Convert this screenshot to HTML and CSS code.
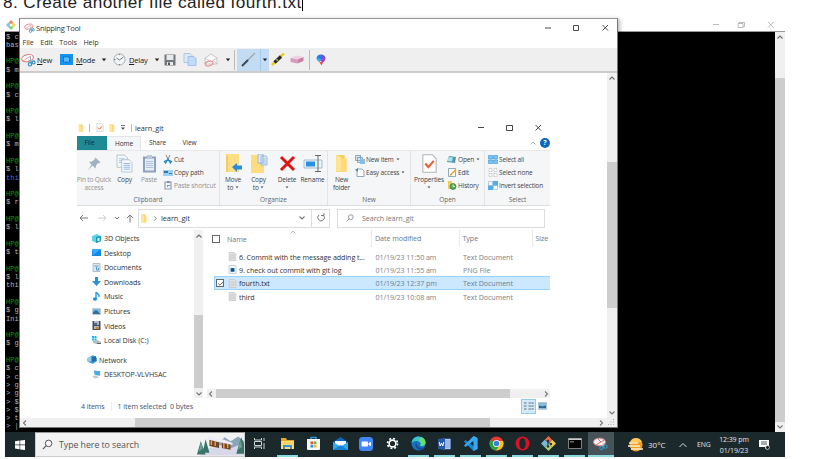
FILE: index.html
```html
<!DOCTYPE html>
<html lang="en">
<head>
<meta charset="utf-8">
<title>Create another file</title>
<link rel="stylesheet" href="styles.css">
</head>
<body>
<svg class="defs" width="0" height="0">
  <symbol id="folder" viewBox="0 0 12 18"><path fill="#f5cd60" d="M1 1h8v16H1z"/><path fill="#ffe594" d="M1 1l5 2v14l-5-1z"/><path fill="#ffd978" d="M6 4h5v13H6z"/></symbol>
  <symbol id="snip" viewBox="0 0 16 14"><ellipse cx="7" cy="5" rx="6.3" ry="3.7" fill="#fff" stroke="#e0767b" stroke-width="1.1" transform="rotate(-14 7 5)"/><path d="M2 8l8-5" stroke="#e59a9c"/><path d="M10 3v7M8 7l5 3" stroke="#8ba5b4"/><circle cx="9.5" cy="11.6" r="1.8" fill="none" stroke="#2c8fc4" stroke-width="1.2"/><circle cx="13.3" cy="9.6" r="1.7" fill="none" stroke="#2c8fc4" stroke-width="1.2"/></symbol>
  <symbol id="doc" viewBox="0 0 9 10"><path fill="#e4e4e4" stroke="#bcbcbc" stroke-width=".7" d="M.8.6h5.7l1.7 1.7v7.1H.8z"/><path stroke="#bdbdbd" stroke-width=".6" d="M2 3h5M2 4.5h5M2 6h5M2 7.5h5"/></symbol>
  <symbol id="pages" viewBox="0 0 18 20"><path fill="#f3f8fd" stroke="#a9b7c6" stroke-width=".8" d="M1 1h8l3 3v10H1z"/><path stroke="#a3c4eb" d="M3 5h6M3 7h6M3 9h6"/><path fill="#f3f8fd" stroke="#a9b7c6" stroke-width=".8" d="M6 6h8l3 3v10H6z"/><path stroke="#8eb9eb" d="M8 10h7M8 12h7M8 14h7M8 16h7"/></symbol>
  <symbol id="up" viewBox="0 0 8 6"><path fill="none" stroke="#707070" stroke-width="1.2" d="M1.5 4.500L4 2l2.500 2.500"/></symbol>
  <symbol id="down" viewBox="0 0 8 6"><path fill="none" stroke="#777" stroke-width="1.1" d="M1.500 1.500L4 4l2.500-2.500"/></symbol>
  <symbol id="lt" viewBox="0 0 6 8"><path fill="none" stroke="#777" stroke-width="1.1" d="M4 1.500L1.500 4 4 6.500"/></symbol>
  <symbol id="rt" viewBox="0 0 6 8"><path fill="none" stroke="#777" stroke-width="1.1" d="M2 1.500L4.500 4 2 6.500"/></symbol>
  <symbol id="caret" viewBox="0 0 6 4"><path d="M.8.500h4.400L3 3.200z" fill="currentColor"/></symbol>
  <symbol id="mag" viewBox="0 0 10 10"><circle cx="6" cy="4" r="3" fill="none" stroke="currentColor" stroke-width=".9"/><path d="M3.900 6.100L.8 9.200" stroke="currentColor"/></symbol>
  <symbol id="check" viewBox="0 0 14 18"><path fill="#fff" stroke="#b4b4b4" d="M.7.700h9l3.600 3.600v13H.7z"/><path d="M3 9l3 3.500L11 6.500" fill="none" stroke="#e8612c" stroke-width="2"/></symbol>
</svg>
<p class="step">8. Create another file called fourth.txt<i class="cursor"></i></p>
<div class="desktop">
  <section class="bash">
    <header class="bash-bar">
      <svg width="10" height="10" viewBox="0 0 12 12"><path fill="#f58f5c" d="M6 0l3 3-3 3-3-3z"/><path fill="#7fc6ef" d="M3 3l3 3-3 3-3-3z"/><path fill="#8fd178" d="M6 6l3 3-3 3-3-3z"/><path fill="#f7d36b" d="M9 3l3 3-3 3-3-3z"/><circle cx="6" cy="6" r="1.500" fill="#fff"/></svg>
      <svg class="bash-ctl" width="62" height="10" viewBox="0 0 62 10" fill="none" stroke="#aaa" stroke-width=".8"><path d="M1 4.500h6M56 2l5.500 5.500M61.500 2L56 7.500"/><path d="M26 3.500h5v4h-5zM27 3.500v-1h5.500v4H31"/></svg>
    </header>
    <div class="bash-body">
<pre class="term">$ c
bas

<b>HP@</b>
$ m

<b>HP@</b>
$ c

<b>HP@</b>
$ l

<b>HP@</b>
$ m

<b>HP@</b>
$ l
<u>thi</u>

<b>HP@</b>
$ r

<b>HP@</b>
$ l

<b>HP@</b>
$ t

<b>HP@</b>
$ l
thi

<b>HP@</b>
$ g
Ini

<b>HP@</b>
$ g

<b>HP@</b>
$ c
&gt; c
&gt; g
&gt; g
&gt; $
&gt; $
&gt; t
&gt; |</pre>
      <div class="vbar bash-scroll"><svg width="8" height="6"><use href="#up"/></svg><i></i><svg width="8" height="6"><use href="#down"/></svg></div>
    </div>
  </section>

  <section class="snipping">
    <header class="snip-bar">
      <svg width="11" height="10"><use href="#snip"/></svg><span>Snipping Tool</span>
      <svg class="snip-ctl" width="65" height="8" viewBox="0 0 65 8" fill="none" stroke="#333" stroke-width=".9"><path d="M0 4h6M57.500 1L63 6.500M63 1l-5.500 5.500M28.500 1.500h5v5h-5z"/></svg>
    </header>
    <nav class="menu"><span>File</span><span>Edit</span><span>Tools</span><span>Help</span></nav>
    <div class="tools">
      <div class="tool t-new"><svg width="15" height="14"><use href="#snip"/></svg><span><u>N</u>ew</span></div>
      <div class="tool t-mode"><svg width="13" height="11" viewBox="0 0 13 11"><path fill="#1593ef" d="M0 0h13v11H0z"/><path fill="#58baff" stroke="#0867ba" stroke-dasharray="1 .5" d="M3.500 3h6v5h-6z"/></svg><span><u>M</u>ode</span><svg width="6" height="4"><use href="#caret"/></svg></div>
      <div class="tool t-delay"><svg width="13" height="13" viewBox="0 0 13 13"><circle cx="6.500" cy="6.500" r="5.600" fill="#f2f4f5" stroke="#a5adb3"/><path fill="none" stroke="#727b82" d="M3.500 5l3 2 4-3M6.500 1v1M1 6.500h1.500M6.500 11v1"/></svg><span><u>D</u>elay</span><svg width="6" height="4"><use href="#caret"/></svg></div>
      <svg class="t-save" width="12" height="12" viewBox="0 0 12 12"><path fill="#72777b" d="M.5.500h11v11H.5z"/><path fill="#e7eaed" d="M2.500 1h7v5h-7zM3 8h6v3H3z"/><path fill="#555" d="M4 8.500h2V11H4z"/></svg>
      <svg class="t-pages" width="14" height="13" viewBox="0 0 14 13"><path fill="#dceaf8" stroke="#9bb8d7" stroke-width=".7" d="M1 .5h6l2 2v7H1z"/><path fill="#c0dcfa" stroke="#8fafe0" stroke-width=".7" d="M5 3.500h6l2 2v7H5z"/></svg>
      <svg class="t-mail" width="14" height="14" viewBox="0 0 14 14"><path fill="#f8f8f8" stroke="#bbb" stroke-width=".8" d="M1 5l6-4 6 4v6H1z"/><path fill="none" stroke="#bbb" stroke-width=".7" d="M1 5l6 4 6-4M1 11l4-4M13 11L9 7"/><ellipse cx="5" cy="10.500" rx="4" ry="2.300" fill="none" stroke="#ed8888" transform="rotate(-15 5 10)"/></svg>
      <svg class="t-caret" width="6" height="4"><use href="#caret"/></svg>
      <i class="rule"></i>
      <div class="pen"><svg width="23" height="21" viewBox="0 0 23 21"><path d="M9 13L18 4" stroke="#9da5aa" stroke-width="1.300"/><path d="M5 17l6-6" stroke="#40484e" stroke-width="2"/></svg><span><svg width="6" height="4"><use href="#caret"/></svg></span></div>
      <svg class="t-high" width="14" height="13" viewBox="0 0 14 13"><path d="M1 12l3-3M9 4l4-3.500" stroke="#e6ce23" stroke-width="2.500"/><path d="M3.500 9.500L10 3.500" stroke="#252b28" stroke-width="3.200"/><path d="M5.500 7.500l1.300-1" stroke="#d1bd28" stroke-width="2"/></svg>
      <svg class="t-erase" width="14" height="9" viewBox="0 0 14 9"><path fill="#efd0e1" d="M.5 3l6-2.500L13.500 2l-6 2.500z"/><path fill="#d99abd" d="M.5 3l7 1.500v4l-7-1.500z"/><path fill="#c880a6" d="M7.500 4.500l6-2.500v4l-6 2.500z"/></svg>
      <i class="rule r2"></i>
      <svg class="t-paint" width="10" height="12" viewBox="0 0 10 12"><path fill="#227fe5" d="M5 .5C2 .5.500 2.500.5 4.500L5 6z"/><path fill="#7a4be2" d="M5 .5c3 0 4.500 2 4.500 4L5 6z"/><path fill="#29b9e9" d="M.5 4c0 2 1 3 3 4L5 5z"/><path fill="#a236d2" d="M9.500 4.500C9.500 7 7 8 6.500 9L4 6z"/><path fill="#ed4a46" d="M3 7.500l4 1L5.500 11.500z"/></svg>
    </div>
    <div class="canvas">
      <div class="explorer">
        <header class="ex-bar">
          <svg width="6" height="8"><use href="#folder"/></svg><i class="bar"></i><svg class="q-check" width="8" height="9"><use href="#check"/></svg><svg class="q-fold" width="6" height="8"><use href="#folder"/></svg><svg class="q-drop" width="4" height="5" viewBox="0 0 4 5"><path fill="#444" d="M0 0h4v.8H0zM0 2.500h4L2 4.700z"/></svg><i class="bar b2"></i><span>learn_git</span>
          <svg class="ex-ctl" width="65" height="8" viewBox="0 0 65 8" fill="none" stroke="#333" stroke-width=".9"><path d="M0 3.500h6M57.500 1L63 6.500M63 1l-5.500 5.500M28.500 1.500h6v5h-6z"/></svg>
        </header>
        <nav class="tabs"><span class="file">File</span><span class="home">Home</span><span class="share">Share</span><span class="view">View</span>
          <svg width="8" height="6"><path fill="none" stroke="#999" stroke-width=".8" d="M1.500 4.500L4 2l2.500 2.500"/></svg><b class="help">?</b></nav>
        <div class="ribbon">
          <section class="g-clip"><div class="cmds">
            <div class="big dim pin"><svg width="16" height="18" viewBox="0 0 16 18"><path fill="#9fb1c5" d="M9.500 3l5 5-1.500.8-1-.3-2 2.500-.5 3-3-3-4.500 5 3.500-6-2.500-2.500 3-.5L8.500 5z"/></svg><span>Pin to Quick<br>access</span></div>
            <div class="big copy"><svg width="17" height="18"><use href="#pages"/></svg><span>Copy</span></div>
            <div class="big dim paste"><svg width="15" height="18" viewBox="0 0 15 18"><path fill="#8ea0bb" d="M1 2h13v16H1z"/><path fill="#e6edf7" d="M3 4h9v12H3z"/><path fill="#bac8db" d="M5 .5h5V4H5z"/><path stroke="#b2c3dd" d="M4 7h7M4 9h7M4 11h7M4 13h7"/></svg><span>Paste</span></div>
            <div class="small"><p><svg width="10" height="9" viewBox="0 0 10 9"><path stroke="#888" d="M3 0l3 6M7 0L4 6"/><path fill="none" stroke="#2189c4" stroke-width="1.300" d="M4.500 5L2.500 8 1.500 6.500zM5.500 5l2 3 1-1.500z"/></svg>Cut</p><p><svg width="10" height="9" viewBox="0 0 10 9"><path fill="#9ed1f1" d="M0 2h10v6H0z"/><path fill="#2b78b6" d="M1 3h4v2H1zM6 5h3v1H6z"/></svg>Copy path</p><p class="dim"><svg width="10" height="9" viewBox="0 0 10 9"><path fill="#f0f4f8" stroke="#8fa1ba" stroke-width="1.200" d="M2 1h6v7H2z"/><path fill="#8097b9" d="M4 0h3v2H4zM4 6V4h3v1H5v1z"/></svg>Paste shortcut</p></div>
          </div><h4>Clipboard</h4></section>
          <section class="g-org"><div class="cmds">
            <div class="big move"><svg width="17" height="19" viewBox="0 0 17 19"><path fill="#ffdf84" d="M1 0h13v18H1z"/><path fill="#f7cc62" d="M1 0l2 2v16H1z"/><path fill="#2b8cdb" d="M7 13l5-4v2.500h5v4h-5V18z"/></svg><span>Move<br>to <svg width="4" height="3"><use href="#caret"/></svg></span></div>
            <div class="big copyto"><svg width="18" height="19" viewBox="0 0 18 19"><path fill="#ffdc80" d="M1 1h13v18H1z"/><path fill="#dfeefd" stroke="#8eacc9" stroke-width=".8" d="M8 0h5v9H8zM11 2h5l1 1v8h-6z"/><path stroke="#9ec2ec" d="M12 5h4M12 7h4M12 9h4"/></svg><span>Copy<br>to <svg width="4" height="3"><use href="#caret"/></svg></span></div>
            <div class="big del"><svg width="17" height="19" viewBox="0 0 17 19"><path d="M2 3l13 13M15 3L2 16" stroke="#dc1414" stroke-width="3"/></svg><span>Delete<br><svg width="4" height="3"><use href="#caret"/></svg></span></div>
            <div class="big ren"><svg width="20" height="19" viewBox="0 0 20 19"><path fill="#e8f3fc" stroke="#9aafc0" stroke-width=".8" d="M1 6h18v8H1z"/><path fill="#2a91e2" d="M3 7.500h9v5H3z"/><path fill="none" stroke="#666" d="M12 1.500h6M12 17.500h6M15 2v15"/></svg><span>Rename</span></div>
          </div><h4>Organize</h4></section>
          <section class="g-new"><div class="cmds">
            <div class="big newf"><svg width="13" height="19"><use href="#folder"/></svg><span>New<br>folder</span></div>
            <div class="small"><p><svg width="10" height="9" viewBox="0 0 10 9"><path fill="#d5e5ef" stroke="#7795a9" stroke-width=".8" d="M.5.500h5v5h-5zM2.500 2.500h5v5h-5z"/><path fill="#87bce3" d="M5 4h5v5H5z"/></svg>New item <svg class="c" width="4" height="3"><use href="#caret"/></svg></p><p><svg width="10" height="9" viewBox="0 0 10 9"><path fill="#fff" stroke="#879db1" stroke-width=".9" d="M2 1h5l2 2v5.500H2z"/><path fill="#4c88b8" d="M0 2l3-2v4z"/></svg>Easy access <svg class="c" width="4" height="3"><use href="#caret"/></svg></p></div>
          </div><h4>New</h4></section>
          <section class="g-open"><div class="cmds">
            <div class="big prop"><svg width="15" height="19"><use href="#check"/></svg><span>Properties<br><svg width="4" height="3"><use href="#caret"/></svg></span></div>
            <div class="small"><p><svg width="10" height="9" viewBox="0 0 10 9"><path fill="#5397aa" d="M2 1l7 1-1 6-8-1z"/><path fill="#abe2ee" d="M2 2l4 .5-1 4L0 6z"/></svg>Open <svg class="c" width="4" height="3"><use href="#caret"/></svg></p><p><svg width="10" height="9" viewBox="0 0 10 9"><path fill="#fff" stroke="#7598ae" stroke-width=".8" d="M1.500.500h7v8h-7z"/><path stroke="#e7aa27" stroke-width="1.600" d="M3 7.500L9 1.500"/></svg>Edit</p><p><svg width="10" height="9" viewBox="0 0 10 9"><path fill="#f4cb57" d="M1 0h4v8H1z"/><circle cx="6" cy="5.500" r="3" fill="#54a954" stroke="#347f43" stroke-width=".7"/><path fill="none" stroke="#fff" stroke-width=".8" d="M6 3.500v2h2"/></svg>History</p></div>
          </div><h4>Open</h4></section>
          <section class="g-sel"><div class="cmds"><div class="small"><p><svg width="10" height="9" viewBox="0 0 10 9"><path fill="#7ac4f5" stroke="#3a97d9" stroke-width=".6" d="M.5.500h4v3.500h-4zM5.500.500h4v3.500h-4zM.5 5h4v3.500h-4zM5.500 5h4v3.500h-4z"/></svg>Select all</p><p><svg width="10" height="9" viewBox="0 0 10 9"><path fill="#fff" stroke="#b5b5b5" stroke-width=".7" stroke-dasharray="1.200 .4" d="M1 .5h3v3H1zM6 .5h3v3H6zM1 5.500h3v3H1zM6 5.500h3v3H6z"/></svg>Select none</p><p><svg width="10" height="9" viewBox="0 0 10 9"><path fill="#fff" stroke="#8cb9dc" stroke-width=".7" d="M.5.500h4v4h-4zM5.500 4.500h4v4h-4z"/><path fill="#55aeec" d="M5 0h5v4.500H5zM0 4.500h5V9H0z"/></svg>Invert selection</p></div></div><h4>Select</h4></section>
        </div>
        <div class="address">
          <svg class="nav-arrows" width="58" height="12" viewBox="0 0 58 12" fill="none" stroke="#777"><path d="M3 6h8M6 3L3 6l3 3M53 10.500V3M50 6l3-3 3 3"/><path stroke="#ccc" d="M21 6h8M26 3l3 3-3 3"/><path d="M38 5l2 2 2-2"/></svg>
          <div class="path"><svg width="6" height="9"><use href="#folder"/></svg><svg class="p-r" width="6" height="7"><use href="#rt"/></svg><span>learn_git</span><svg class="p-d" width="8" height="6"><use href="#down"/></svg><i></i><svg width="10" height="10" viewBox="0 0 10 10"><path fill="none" stroke="#777" d="M3 2a3.300 3.300 0 1 0 4.500.3M5 2.500h3V0"/></svg></div>
          <div class="find"><svg width="8" height="8"><use href="#mag"/></svg><span>Search learn_git</span></div>
        </div>
        <div class="main">
          <aside class="tree">
            <ul>
              <li><svg width="9" height="9" viewBox="0 0 9 9"><path fill="#5fd3e6" d="M0 2l5-2 4 2v5L5 9 0 7z"/><path fill="#1c9bb8" d="M4 3l5-1v5L4 9z"/><path fill="#d7fbff" d="M5.500 4h2v3h-2z"/></svg>3D Objects</li>
              <li><svg width="9" height="9" viewBox="0 0 9 9"><path fill="#1288e4" d="M0 1h9v7H0z"/><path fill="#37a9ff" d="M0 1h9L1 7z"/></svg>Desktop</li>
              <li><svg width="9" height="9" viewBox="0 0 9 9"><path fill="#dae7ef" stroke="#a1b2bb" stroke-width=".8" d="M1 .5h7v8H1z"/><path fill="none" stroke="#5399c5" d="M2.500 3h4M4.500 4v3h2V5"/></svg>Documents</li>
              <li><svg width="9" height="9" viewBox="0 0 9 9"><path fill="#2b8fdc" d="M3 0h3v4h3L4.500 9 0 4h3z"/></svg>Downloads</li>
              <li><svg width="9" height="9" viewBox="0 0 9 9"><path stroke="#1e91db" stroke-width="1.300" fill="none" d="M4 7V0l3 3v2"/><ellipse cx="3" cy="7" rx="2" ry="1.700" fill="#1e91db"/></svg>Music</li>
              <li><svg width="9" height="9" viewBox="0 0 9 9"><path fill="#e8f3f8" stroke="#a9b9c4" stroke-width=".7" d="M.5 1.500h8v6h-8z"/><path fill="#76bce8" d="M1 2h7v3H1z"/><path fill="#326f96" d="M1 5l3-2 4 3v1H1z"/></svg>Pictures</li>
              <li><svg width="9" height="9" viewBox="0 0 9 9"><path fill="#484b50" d="M.5 0h8v9h-8z"/><path fill="#b1b6bd" d="M2 0h5v4H2zM2 5h5v3H2z"/><path fill="#466e9b" d="M2 2h3v2H2z"/><path fill="#c98638" d="M4 6h3v2H4z"/></svg>Videos</li>
              <li><svg width="9" height="9" viewBox="0 0 9 9"><path fill="#1bb3ed" d="M0 0h2v2H0zM2.500 0h2v2h-2zM0 2.500h2v2H0zM2.500 2.500h2v2h-2z"/><path fill="#b4b9be" d="M1 5l4-1 4 2v2H5L1 7z"/><path fill="#666" d="M5 7h4v1H5z"/></svg>Local Disk (C:)</li>
              <li class="net"><svg width="10" height="9" viewBox="0 0 10 9"><path fill="#4ca0d8" d="M1 3l5-3 4 3v3L6 9 1 7z"/><path fill="#8bd2f3" d="M0 3l4-1v4L0 7z"/><path fill="#276ea7" d="M5 2l4-1v5L5 7z"/></svg>Network</li>
              <li><svg width="9" height="9" viewBox="0 0 10 9"><path fill="#4ba9e7" d="M2 0l7 1v5L3 5z"/><path fill="#c2c8cd" d="M0 6l5 0 3 2-5 1z"/></svg>DESKTOP-VLVHSAC</li>
            </ul>
            <div class="vbar tree-scroll"><svg width="8" height="6"><use href="#up"/></svg><i></i><svg width="8" height="6"><use href="#down"/></svg></div>
          </aside>
          <div class="files">
            <div class="row head"><i class="box"></i><span>Name</span><span class="d">Date modified</span><span class="t">Type</span><span class="s">Size</span><svg class="sort" width="6" height="4" viewBox="0 0 6 4"><path d="M.5 3.500L3 1l2.500 2.500" fill="none" stroke="#999" stroke-width=".7"/></svg></div>
            <div class="row"><svg width="9" height="9"><use href="#doc"/></svg><span>6. Commit with the message adding t...</span><span>01/19/23 11:50 am</span><span>Text Document</span></div>
            <div class="row"><svg width="9" height="9" viewBox="0 0 9 9"><path fill="#f5f8fb" stroke="#b6c2cc" stroke-width=".7" d="M1 .5h7v8H1z"/><path fill="#1679c8" d="M2.500 3h4v3.500h-4z"/><path fill="#164774" d="M3 5l2-2 1.500 3.500H3z"/></svg><span>9. check out commit with git log</span><span>01/19/23 11:55 am</span><span>PNG File</span></div>
            <div class="row sel"><i class="box"><svg width="7" height="7" viewBox="0 0 7 7"><path d="M1.200 3.500L3 5.200 6 1.800" fill="none" stroke="#444" stroke-width=".8"/></svg></i><svg width="9" height="9"><use href="#doc"/></svg><span>fourth.txt</span><span>01/19/23 12:37 pm</span><span>Text Document</span></div>
            <div class="row"><svg width="9" height="9"><use href="#doc"/></svg><span>third</span><span>01/19/23 10:08 am</span><span>Text Document</span></div>
            <div class="hbar file-scroll"><svg width="6" height="8"><use href="#lt"/></svg><i></i><svg width="6" height="8"><use href="#rt"/></svg></div>
          </div>
        </div>
        <footer class="status"><span>4 items</span><i></i><span>1 item selected&nbsp; 0 bytes</span>
          <div class="views"><b><svg width="10" height="10" viewBox="0 0 10 10"><path stroke="#8796a0" stroke-width="1.300" d="M0 2h3M0 5h3M0 8h3M4.500 2H10M4.500 5H10M4.500 8H10" stroke-dasharray="2.400 .5"/></svg></b><svg width="9" height="8" viewBox="0 0 9 8"><path fill="#83bbdf" stroke="#aebcc6" stroke-width=".7" d="M.4.400h8.200v7H.4z"/><path fill="#286b94" d="M1 3.500l3 1 4-1V6H1z"/></svg></div></footer>
      </div>
      <div class="vbar snip-scroll"><svg width="8" height="6"><use href="#up"/></svg><i></i><svg width="8" height="6"><use href="#down"/></svg></div>
    </div>
    <div class="hbar snip-h"><svg width="6" height="8"><use href="#lt"/></svg><i></i><svg width="6" height="8"><use href="#rt"/></svg><svg class="grip" width="7" height="7" viewBox="0 0 7 7"><path fill="#aaa" d="M5 0h1v1H5zM5 2.500h1v1H5zM5 5h1v1H5zM2.500 2.500h1v1h-1zM2.500 5h1v1h-1zM0 5h1v1H0z"/></svg></div>
  </section>

  <footer class="taskbar">
    <div class="start"><svg width="10" height="10" viewBox="0 0 10 10"><path fill="#fff" d="M0 1.200L4.600.6v4H0zM5.200.500L10 0v4.600H5.200zM0 5.200h4.600v4L0 8.600zM5.200 5.200H10V10l-4.800-.6z"/></svg></div>
    <div class="search"><svg width="11" height="11"><use href="#mag"/></svg><span>Type here to search</span>
      <svg class="scene" width="48" height="21" viewBox="0 0 50 21"><path fill="#8ba6bb" d="M18 12L30 2l6 4 8-5 6 5v12z"/><path fill="#d9d8ea" d="M4 21l8-7 12-4 13 3 13-5v13z"/><path fill="#704627" d="M14 4l10 3v6l-10-2zM27 7l9 2v6l-9-2z"/><path stroke="#e8a34a" stroke-width="1.500" d="M16 5v5M20 6v5M29 8v5M33 9v4"/><path fill="#ecebf6" d="M12 2l4-1 9 3v3L12 4zM24 5l4-1 10 4v2L25 7z"/><path fill="#397467" d="M5 6l5 14H1zM10 4l4 14H7zM47 2l3 7v10h-8z"/><path fill="#6ba098" d="M5 6l2 8-4 3zM46 4l2 8-4 3z"/></svg></div>
    <div class="apps">
      <div class="app view-app"><svg width="13" height="13" viewBox="0 0 13 13" fill="none" stroke="#c9d1d4"><path d="M1.500 1v2h7V1M1.500 12v-2h7v2M1.500 4.500h7v4h-7zM11 1v3M11 6v6"/></svg></div>
      <div class="app run"><svg width="15" height="13" viewBox="0 0 15 13"><path fill="#e3a82b" d="M1 1h5l1 2h7v9H1z"/><path fill="#ffda6b" d="M1 4h13v8H1z"/><path fill="#3a91d2" d="M3 12V8h9v4h-2v-2H5v2z"/></svg></div>
      <div class="app"><svg width="15" height="15" viewBox="0 0 15 15"><path fill="none" stroke="#3097d3" stroke-width="1.500" d="M5 4V1.500h5V4"/><path fill="#f5f7f8" d="M1 3h13v10q0 1-1 1H2q-1 0-1-1z"/><path fill="#ee5131" d="M4.500 5.500h2.700v2.700H4.500z"/><path fill="#77b82a" d="M7.800 5.500h2.700v2.700H7.800z"/><path fill="#2296dc" d="M4.500 8.800h2.700v2.700H4.500z"/><path fill="#f7b52b" d="M7.800 8.800h2.700v2.700H7.800z"/></svg></div>
      <div class="app"><svg width="15" height="13" viewBox="0 0 15 13"><path fill="#0e65b5" d="M0 5l7.500-5L15 5v8H0z"/><path fill="#fff" d="M2 4h11v4l-5.500 3L2 8z"/><path fill="#35a8ee" d="M0 5l7.500 4.500L15 5v8H0z"/><path fill="#1682d4" d="M0 13l7.500-5 7.500 5z"/></svg></div>
      <div class="app"><svg width="14" height="14" viewBox="0 0 14 14"><rect width="14" height="14" rx="3.500" fill="#4087fc"/><rect x="2.500" y="4.500" width="6.500" height="5" rx="1" fill="#fff"/><path fill="#fff" d="M9.500 6.300L12 4.800v4.400L9.500 7.700z"/></svg></div>
      <div class="app"><svg width="13" height="13" viewBox="0 0 13 13"><circle cx="6.500" cy="6.500" r="3.400" fill="none" stroke="#fff" stroke-width="1.600"/><circle cx="6.500" cy="6.500" r="5" fill="none" stroke="#fff" stroke-width="1.700" stroke-dasharray="1.960 1.960"/></svg></div>
      <div class="app run"><svg width="15" height="15" viewBox="0 0 15 15"><circle cx="7.500" cy="7.500" r="7" fill="#1674bf"/><path fill="#38c6cd" d="M.6 7C1 3 4 .5 7.500.500c4 0 7 3 7 6 0 3-3 4-5.500 3C11 7 8 5 5 5 3 5 1 6 .6 7z"/><path fill="#6cdc70" d="M10 1c3 1 4.500 3 4.500 5.500 0 3-3 4-5.500 3C11 8 10 6 8 5z"/><path fill="#1b4c91" d="M5 6c-2 4 1 8 5 8 2 0 3-1 4-3-3 2-8 1-9-5z"/></svg></div>
      <div class="app run"><svg width="13" height="12" viewBox="0 0 13 12"><path fill="#f1f5fb" stroke="#5684ca" stroke-width=".8" d="M5 1h7.500v10H5z"/><path stroke="#4278c4" d="M7 3h5M7 5h5M7 7h5M7 9h5"/><path fill="#285aa7" d="M0 1l7-1v12l-7-1z"/><path d="M1.200 4l1 4 1.300-3 1.300 3 1-4" stroke="#fff" fill="none"/></svg></div>
      <div class="app run"><svg width="15" height="15" viewBox="0 0 15 15"><path fill="#168bd2" d="M10.500 0l4 2v11l-4 2L1 5.500 2.500 4 11 10.500z"/><path fill="#38a7ee" d="M10.500 0l4 2v11l-4 2V5L2.500 11 1 9.500z"/></svg></div>
      <div class="app run"><svg width="15" height="15" viewBox="0 0 15 15"><circle cx="7.500" cy="7.500" r="7" fill="#e33b2e"/><path fill="#28a34a" d="M1.300 4.300A7 7 0 0 0 7 14.500L10.500 9z"/><path fill="#fbc116" d="M7 14.500A7 7 0 0 0 14 5H7.500l3 4.500z"/><circle cx="7.500" cy="7.500" r="3.600" fill="#fff"/><circle cx="7.500" cy="7.500" r="2.800" fill="#3e7de0"/></svg></div>
      <div class="app run"><svg width="15" height="15" viewBox="0 0 15 15"><ellipse cx="7.500" cy="7.500" rx="7" ry="7" fill="#d71227"/><ellipse cx="7.500" cy="7.500" rx="3.200" ry="5.500" fill="#1b292d"/></svg></div>
      <div class="app run"><svg width="15" height="15" viewBox="0 0 15 15"><path fill="#e96942" d="M7.500 0L11 3.700 7.500 7.500 3.700 3.700z"/><path fill="#73b9dd" d="M3.700 3.700l3.800 3.800-3.800 3.800L0 7.500z"/><path fill="#aad178" d="M7.500 7.500l3.700 3.800L7.500 15l-3.800-3.700z"/><path fill="#edc958" d="M11.200 3.700L15 7.500l-3.800 3.800-3.700-3.800z"/><path stroke="#28363b" d="M6 4.500l3.500 3.500M7 5v6"/><circle cx="7" cy="10.500" r="1.200" fill="#28363b"/><circle cx="10" cy="8" r="1.200" fill="#28363b"/><circle cx="7" cy="5" r="1.200" fill="#28363b"/></svg></div>
      <div class="app run"><svg width="14" height="11" viewBox="0 0 14 11"><path fill="#060606" stroke="#9a9a9a" stroke-width=".8" d="M.5.500h13v10H.5z"/><path fill="#ccc" d="M.5.500h13V2H.5zM2 3.500h4v.8H2z"/></svg></div>
      <div class="app run active"><svg width="15" height="14" viewBox="0 0 15 14"><ellipse cx="6.500" cy="5" rx="6" ry="3.800" fill="#f8f3f3" stroke="#d98788"/><path d="M3 8l8-5M5 2l3 3" stroke="#d66e70"/><path d="M10 4v6" stroke="#ccc"/><circle cx="8.500" cy="11" r="1.700" fill="none" stroke="#39a0d0"/><circle cx="12.500" cy="9.500" r="1.700" fill="none" stroke="#39a0d0"/></svg></div>
    </div>
    <div class="tray"><svg width="16" height="14" viewBox="0 0 16 14"><circle cx="8" cy="7" r="6.500" fill="#f39b28"/><path fill="#ffc75d" d="M2 4a6.500 6.500 0 0 1 12 0z"/><path stroke="#fff1c9" stroke-width="1.300" d="M1 5h9M0 8h12M3 11h12"/></svg><span class="temp">30°C</span><svg class="tray-up" width="8" height="6" viewBox="0 0 8 6"><path d="M.5 5L4 1.500 7.500 5" fill="none" stroke="#ddd"/></svg><span class="lang">ENG</span><span class="clock">12:39 pm<br>01/19/23</span><svg class="note" width="11" height="12" viewBox="0 0 11 12"><path fill="#fff" d="M0 1h10v7H8l-2 2V8H0z"/><path stroke="#20333a" stroke-width=".8" d="M2 3h6M2 5h6"/><circle cx="8.500" cy="8.500" r="2" fill="#1b292d" stroke="#fff" stroke-width=".6"/></svg></div>
  </footer>
</div>
</body>
</html>
```
FILE: styles.css
```css
* { box-sizing: border-box; }
html, body { margin: 0; background: #fff; overflow: hidden; }
body { width: 835px; height: 459px; font-family: "Open Sans", "Noto Sans", sans-serif; font-size: 7px; color: #333; }
svg { display: block; flex: none; }
i { display: block; flex: none; }
p, h4, ul, pre { margin: 0; padding: 0; }
.defs { position: absolute; }
.step { display: flex; height: 25px; margin-top: -7px; padding-left: 3px; font: 17.200px/18px "Liberation Sans", sans-serif; letter-spacing: .42px; color: #222; white-space: nowrap; }
.cursor { width: 1.500px; height: 16px; background: #000; margin-top: 2px; }
.desktop { position: relative; width: 780px; height: 439px; margin-left: 5px; display: flex; flex-direction: column; }
.bash { height: 414px; display: flex; flex-direction: column; }
.bash-bar { height: 14px; display: flex; align-items: center; padding: 0 11px 0 1px; border-bottom: 1px solid #999; background: #fff; }
.bash-ctl { margin-left: auto; }
.bash-body { height: 400px; display: flex; justify-content: space-between; background: #000; }
.term { padding: .5px 0 0 1px; font: 7px/8.290px "Liberation Mono", monospace; color: #b4b4b4; width: 14px; }
.term b { color: #069a06; font-weight: 400; }
.term u { color: #5366d8; text-decoration: none; }
.vbar { width: 10px; background: #f0f0f0; display: flex; flex-direction: column; align-items: center; padding: 2px 0; }
.vbar i { width: 100%; background: #cdcdcd; }
.vbar svg:last-child { margin-top: auto; }
.bash-scroll i { height: 344px; margin-top: 38px; }
.hbar { background: #f0f0f0; display: flex; align-items: center; height: 9px; }
.hbar i { height: 100%; background: #cdcdcd; }

.snipping { position: absolute; left: 14px; top: 0; width: 599px; height: 410px; background: #fff; border: 1px solid #777; border-top-color: #999; box-shadow: 2px 1px 4px #0004; display: flex; flex-direction: column; }
.snip-bar { height: 17px; display: flex; align-items: center; padding-left: 4px; font-size: 7.600px; letter-spacing: -.27px; color: #333; }
.snip-bar span { margin-left: 1px; }
.snip-ctl { margin-left: auto; margin-right: 7px; }
.menu { height: 12px; display: flex; gap: 6.500px; padding-left: 2.500px; font-size: 7.200px; line-height: 13px; letter-spacing: -.05px; }
.tools { height: 25px; background: #efefef; border-bottom: 2px solid #ccc; display: flex; align-items: center; padding-left: 1px; color: #222; font-size: 7.500px; letter-spacing: -.2px; }
.tool { display: flex; align-items: center; }
.tool span { margin-left: 2px; }
.tool u { text-underline-offset: 1px; text-decoration-thickness: .6px; }
.t-new { width: 39px; } .t-new span { margin-left: 1px; }
.t-mode { width: 53px; } .t-mode span { margin-left: 3px; width: 25px; }
.t-delay { width: 51px; } .t-delay span { margin-left: 3px; width: 25px; }
.t-save { margin-right: 7px; } .t-pages { margin-right: 7px; } .t-mail { margin-right: 7px; }
.rule { width: 1px; height: 20px; background: #bbb; margin: 0 2px 0 3px; }
.pen { width: 32px; height: 22px; background: #c1dcf3; display: flex; align-items: center; }
.pen span { height: 22px; border-left: 1px solid #a4cce8; display: flex; align-items: center; padding-left: 1px; }
.t-high { margin-left: 2px; } .t-erase { margin-left: 5px; }
.r2 { margin: 0 6px 0 5px; }
.canvas { height: 345px; display: flex; justify-content: space-between; }
.snip-scroll i { height: 146px; margin-top: 81px; }
.snip-h i { width: 355px; margin-left: 107px; }
.snip-h > svg:first-child { margin-left: 2px; }
.snip-h > svg:nth-of-type(2) { margin-left: 108px; }
.grip { margin-left: auto; margin-right: 2px; }

.explorer { width: 474px; margin: 46px 0 0 57px; height: 298px; display: flex; flex-direction: column; letter-spacing: -.08px; }
.ex-bar { height: 17px; display: flex; align-items: center; padding-left: 1px; font-size: 7.350px; }
.bar { width: 1px; height: 8px; background: #bbb; margin-left: 5px; }
.q-check { margin-left: 6px; } .q-fold { margin-left: 5px; } .q-drop { margin-left: 6px; }
.ex-bar .b2 { margin: 0 3px 0 6px; }
.ex-ctl { margin-left: auto; margin-right: 8px; }
.tabs { height: 14px; display: flex; align-items: center; font-size: 6.500px; }
.tabs span { height: 14px; line-height: 14px; text-align: center; }
.file { width: 30px; background: #1f8a94; color: #062e33; padding-right: 5px; }
.home { width: 34px; background: #f5f6f7; border: 1px solid #e5e5e5; border-bottom: 0; }
.share { width: 33px; } .view { width: 31px; }
.tabs > svg { margin-left: auto; }
.help { width: 10px; height: 10px; margin: 0 1px 0 3px; border-radius: 50%; background: #0e67bc; color: #fff; font-size: 7px; line-height: 10px; text-align: center; }
.ribbon { height: 56px; display: flex; background: #f5f6f7; border-top: 1px solid #e8e8e8; border-bottom: 1px solid #ddd; font-size: 6.500px; letter-spacing: -.15px; color: #444; width: 473px; }
.ribbon section { height: 54px; border-right: 1px solid #e3e4e6; display: flex; flex-direction: column; }
.ribbon section:last-child { border-right: 0; }
.g-clip { width: 143px; } .g-org { width: 108px; } .g-new { width: 83px; } .g-open { width: 74px; } .g-sel { width: 65px; }
.cmds { height: 43px; display: flex; padding-top: 2.500px; }
.ribbon h4 { font-size: 6.500px; font-weight: 400; line-height: 11px; text-align: center; color: #666; letter-spacing: -.05px; }
.big { display: flex; flex-direction: column; align-items: center; text-align: center; white-space: nowrap; }
.big > svg { height: 19px; }
.big > span { line-height: 8px; margin-top: 3.500px; }
.big span svg { display: inline-block; vertical-align: 1px; }
.dim { color: #929292; }
.pin { width: 34px; } .copy { width: 27px; } .paste { width: 22px; }
.move { width: 26px; } .copyto { width: 25px; } .del { width: 29px; padding-left: 3px; } .ren { width: 25px; }
.newf { width: 27px; } .prop { width: 36px; }
.small p { height: 12.800px; display: flex; align-items: center; gap: 1px; white-space: nowrap; }
.small .c { margin-left: 1px; }
.g-clip .small { margin-left: 3px; } .g-sel .small { margin-left: 3px; }
.address { height: 24px; display: flex; align-items: center; font-size: 7.400px; }
.nav-arrows { margin-right: 3px; }
.path { width: 192px; height: 19px; border: 1px solid #ddd; display: flex; align-items: center; padding-left: 2px; }
.path span { margin-left: 3px; } .p-r { margin-left: 5px; }
.p-d { margin-left: auto; } .path i { width: 1px; height: 17px; background: #ddd; margin: 0 4px 0 5px; }
.path > svg:last-child { margin-right: 3px; }
.find { width: 208px; height: 19px; border: 1px solid #ddd; margin-left: 7px; display: flex; align-items: center; color: #777; font-size: 7.150px; }
.find svg { margin: 0 8px 0 8px; }
.main { height: 168px; display: flex; }
.tree { width: 126px; display: flex; }
.tree ul { width: 117px; list-style: none; padding: 1px 0 0 15px; font-size: 7.150px; color: #333; }
.tree li { height: 14.560px; display: flex; align-items: center; gap: 3px; white-space: nowrap; }
.tree .net { margin: 5px 0 0 -5px; gap: 2px; }
.tree-scroll i { height: 73px; margin-top: 76px; }
.tree-scroll { width: 9px; padding: 3px 0 1px; }
.files { width: 347px; padding-left: 4px; display: flex; flex-direction: column; font-size: 7.150px; }
.row { height: 13.200px; margin-left: 8px; display: grid; grid-template-columns: 6px 7px 11px 136.500px 87.500px 1fr; align-items: center; color: #838383; white-space: nowrap; }
.row > span:nth-of-type(1) { grid-column: 4; color: #333; }
.row > svg { grid-column: 3; grid-row: 1; }
.row .box { grid-column: 1; grid-row: 1; width: 8px; height: 8px; border: 1px solid #666; background: #fff; }
.head { position: relative; height: 17px; margin: 0 0 3px 5px; grid-template-columns: 15px 144px 87.500px 73px 1fr; color: #6d7a88; }
.row.head > span:nth-of-type(1) { grid-column: 2; color: #6d7a88; }
.head .d, .head .t, .head .s { border-left: 1px solid #e8e8e8; height: 17px; line-height: 16px; padding-left: 3px; }
.row > .sort { position: absolute; grid-area: auto; left: 78px; top: 0; }
.row.sel { background: #cce8ff; border: 1px solid #99d1ff; border-right: 0; color: #6b7f92; margin-left: 7px; height: 14px; }
.row .box svg { margin: -.5px; }
.row.sel .box { margin-left: 1px; }
.file-scroll { width: 343px; margin-top: auto; }
.file-scroll i { width: 294px; margin-left: 2px; }
.file-scroll svg:first-child { margin-left: 1px; }
.file-scroll svg:last-child { margin-left: auto; margin-right: 1px; }
.status { height: 16px; display: flex; align-items: center; padding-left: 4px; font-size: 7.100px; color: #3f536d; }
.status i { width: 1px; height: 9px; background: #eee; margin: 0 6px; }
.views { margin-left: auto; display: flex; align-items: center; gap: 2px; margin-right: 4px; }
.views b { width: 15px; height: 15px; background: #d2ebf8; border: 1px solid #92cae8; display: flex; align-items: center; justify-content: center; }

.taskbar { height: 25px; background: #1b292d; display: flex; }
.start { width: 30px; display: flex; align-items: center; justify-content: center; }
.search { width: 210px; background: #f2f2f2; border: 1px solid #ccc; border-top-color: #999; display: flex; align-items: center; padding-left: 6px; font-size: 8.800px; color: #555; }
.search span { margin-left: 6px; letter-spacing: -.05px; white-space: nowrap; }
.scene { margin-left: auto; margin-top: 2px; }
.apps { display: flex; margin-left: 1px; }
.app { width: 26.100px; height: 25px; display: flex; align-items: center; justify-content: center; border-bottom: 2px solid transparent; }
.view-app { margin-right: 2.700px; }
.run { border-bottom: 0; flex-direction: column; justify-content: space-between; }
.run::after { content: ""; width: 21px; height: 2px; background: #8bd8e4; }
.run svg { margin: auto; }
.active { background: #46545a; }
.active::after { width: 100%; }
.tray { display: flex; align-items: center; margin-left: 14px; color: #e0e5e7; font-size: 8px; white-space: nowrap; }
.temp { margin-left: 4px; width: 31px; }
.lang { font-size: 6.800px; margin-left: 10px; width: 20px; letter-spacing: -.1px; }
.clock { font-size: 7px; line-height: 11px; width: 34px; text-align: center; letter-spacing: -.1px; }
.note { margin-left: 8px; }
```
